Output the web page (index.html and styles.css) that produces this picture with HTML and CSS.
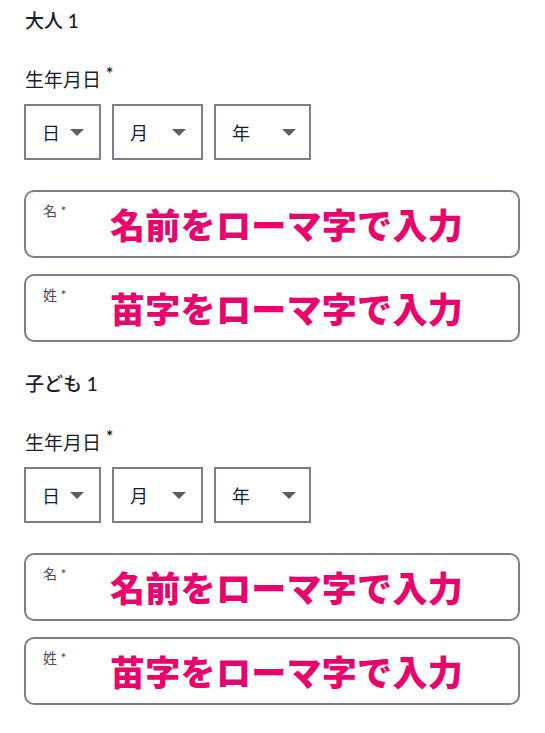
FILE: index.html
```html
<!DOCTYPE html>
<html lang="ja">
<head>
    <meta charset="UTF-8">
    <meta name="viewport" content="width=device-width, initial-scale=1.0">
    <title>搭乗者情報</title>
    <link rel="stylesheet" href="styles.css">
</head>
<body>
    <div class="passengers">
        <!-- 大人 -->
        <div class="passenger">
            <h3 class="passenger-title">大人 1</h3>
            <div class="field-label">生年月日 <span class="req">*</span></div>
            <div class="date-row">
                <div class="select select-day"><span>日</span><span class="caret"></span></div>
                <div class="select select-month"><span>月</span><span class="caret"></span></div>
                <div class="select select-year"><span>年</span><span class="caret"></span></div>
            </div>
            <div class="name-input">
                <span class="float-label">名 *</span>
                <span class="hint">名前をローマ字で入力</span>
            </div>
            <div class="name-input">
                <span class="float-label">姓 *</span>
                <span class="hint">苗字をローマ字で入力</span>
            </div>
        </div>

        <!-- 子ども -->
        <div class="passenger">
            <h3 class="passenger-title">子ども 1</h3>
            <div class="field-label">生年月日 <span class="req">*</span></div>
            <div class="date-row">
                <div class="select select-day"><span>日</span><span class="caret"></span></div>
                <div class="select select-month"><span>月</span><span class="caret"></span></div>
                <div class="select select-year"><span>年</span><span class="caret"></span></div>
            </div>
            <div class="name-input">
                <span class="float-label">名 *</span>
                <span class="hint">名前をローマ字で入力</span>
            </div>
            <div class="name-input">
                <span class="float-label">姓 *</span>
                <span class="hint">苗字をローマ字で入力</span>
            </div>
        </div>
    </div>
</body>
</html>
```

FILE: styles.css
```css
body {
    font-family: Lato, "Noto Sans CJK JP", sans-serif;
    background: #ffffff;
    color: #1c1d2b;
    margin: 0;
    padding: 0;
}
.passengers {
    padding: 9px 25px 0 24px;
    display: flex;
    flex-direction: column;
    gap: 30px;
}
.passenger {
    display: flex;
    flex-direction: column;
}
.passenger-title {
    font-size: 19px;
    font-weight: 500;
    line-height: 24px;
    margin: 0;
    padding-left: 1px;
}
.field-label {
    font-size: 19px;
    line-height: 24px;
    margin-top: 35px;
    padding-left: 1px;
}
.req {
    font-size: 17px;
    font-weight: 700;
    line-height: 0;
    vertical-align: 7px;
}
.date-row {
    display: flex;
    gap: 11px;
    margin-top: 12px;
}
.select {
    height: 56px;
    box-sizing: border-box;
    border: 2px solid #7c7e89;
    display: flex;
    align-items: center;
    justify-content: space-between;
    padding: 0 15px 0 16px;
    font-size: 18px;
}
.select-day {
    width: 77px;
}
.select-month {
    width: 91px;
}
.select-year {
    width: 97px;
    padding-right: 13px;
}
.caret {
    width: 0;
    height: 0;
    border-left: 7px solid transparent;
    border-right: 7px solid transparent;
    border-top: 7px solid #5c5e69;
}
.name-input {
    position: relative;
    height: 68px;
    box-sizing: border-box;
    border: 2px solid #7c7e89;
    border-radius: 10px;
    margin-top: 16px;
    display: flex;
    align-items: center;
    padding-left: 84px;
}
.date-row + .name-input {
    margin-top: 30px;
}
.float-label {
    position: absolute;
    left: 17px;
    top: 8px;
    font-size: 14px;
    color: #4a4b55;
}
.hint {
    font-family: "Noto Sans CJK JP", sans-serif;
    font-size: 35px;
    font-weight: 900;
    color: #e8046d;
    line-height: 40px;
    letter-spacing: 0.3px;
}
```
